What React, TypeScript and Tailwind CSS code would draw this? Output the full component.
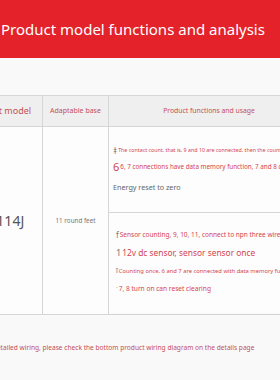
export default function App() {
  return (
    <div className="w-[280px] h-[380px] overflow-hidden bg-[#f9f9f9] font-['Noto_Sans',sans-serif]">
      <div className="h-[58px] bg-[#e3222a] flex items-center pl-[1px]">
        <h1 className="text-white text-[15px] whitespace-nowrap">Product model functions and analysis</h1>
      </div>

      <div className="mt-[37px] -ml-[42px] w-[400px] flex border-t border-b border-[#d6d6d6]">
        {/* model */}
        <div className="w-[85px] flex flex-col border-r border-[#d6d6d6]">
          <div className="h-[31px] bg-[#efefef] border-b border-[#d6d6d6] flex items-center justify-center text-[9px] text-[#c34f59] whitespace-nowrap">
            Product model
          </div>
          <div className="bg-[#fdfdfd] h-[187px] flex items-center justify-center text-[14px] text-[#555] whitespace-nowrap">
            DH114J
          </div>
        </div>

        {/* base */}
        <div className="w-[66px] flex flex-col border-r border-[#d6d6d6]">
          <div className="h-[31px] bg-[#efefef] border-b border-[#d6d6d6] flex items-center justify-center text-[7px] text-[#c34f59] whitespace-nowrap">
            Adaptable base
          </div>
          <div className="bg-[#fdfdfd] h-[187px] flex items-center justify-center text-[6.3px] text-[#777] whitespace-nowrap">
            11 round feet
          </div>
        </div>

        {/* usage */}
        <div className="flex-1 flex flex-col">
          <div className="h-[31px] w-[200px] bg-[#efefef] border-b border-[#d6d6d6] flex items-center justify-center text-[6.8px] text-[#c34f59] whitespace-nowrap">
            Product functions and usage
          </div>
          <div className="bg-[#fdfdfd] h-[86px] border-b border-[#d6d6d6] pl-[4px] pt-[16px] whitespace-nowrap">
            <div className="h-[16px] flex items-center text-[5.3px] text-[#d4444f]">
              <span className="text-[8px] text-[#666] mr-[1px]">ǂ</span>
              The contact count, that is, 9 and 10 are connected, then the count is cleared
            </div>
            <div className="h-[16px] flex items-center text-[6.3px] text-[#d4444f]">
              <span className="text-[11px] mr-[1px]">6</span>
              6, 7 connections have data memory function, 7 and 8 connected
            </div>
            <div className="mt-[4px] h-[16px] flex items-center text-[7.2px] text-[#666]">
              Energy reset to zero
            </div>
          </div>
          <div className="bg-[#fdfdfd] h-[100px] pl-[7px] pt-[13px] whitespace-nowrap">
            <div className="h-[18px] flex items-center text-[6.5px] text-[#d4444f]">
              <span className="text-[8px] text-[#777] mr-[1px]">f</span>
              Sensor counting, 9, 10, 11, connect to npn three wire
            </div>
            <div className="h-[18px] flex items-center text-[8.4px] text-[#d4444f]">
              <span className="text-[9px] text-[#777] mr-[1px]">1</span>
              12v dc sensor, sensor sensor once
            </div>
            <div className="h-[18px] flex items-center text-[5.8px] text-[#d4444f]">
              <span className="text-[7px] text-[#777] mr-[1px]">ĩ</span>
              Counting once, 6 and 7 are connected with data memory function
            </div>
            <div className="h-[18px] flex items-center text-[6.6px] text-[#d4444f]">
              <span className="text-[6px] text-[#999] mr-[1px]">`</span>
              7, 8 turn on can reset clearing
            </div>
          </div>
        </div>
      </div>

      <p className="mt-[27px] -ml-[19px] leading-[12px] text-[6.6px] text-[#c34f59] whitespace-nowrap">
        For detailed wiring, please check the bottom product wiring diagram on the details page
      </p>
    </div>
  );
}
